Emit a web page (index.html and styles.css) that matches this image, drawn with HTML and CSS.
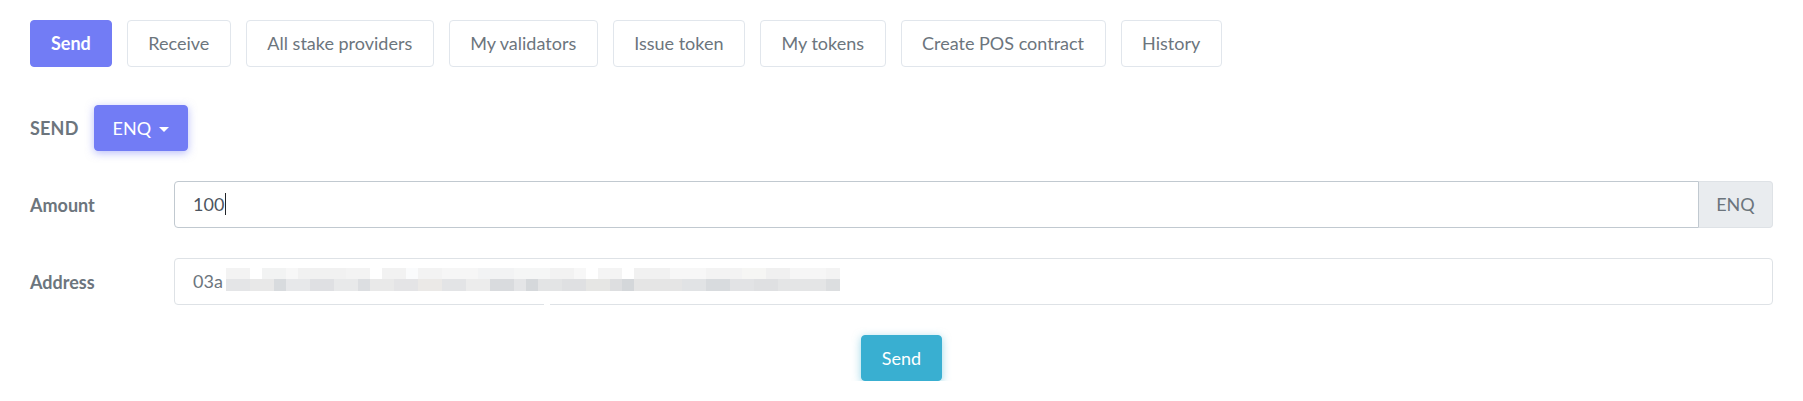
FILE: index.html
```html
<!DOCTYPE html>
<html lang="en">
<head>
<meta charset="utf-8">
<title>Send</title>
<link rel="stylesheet" href="styles.css">
</head>
<body>
<div class="page">
  <nav class="tabs">
    <button class="tab active">Send</button>
    <button class="tab">Receive</button>
    <button class="tab">All stake providers</button>
    <button class="tab">My validators</button>
    <button class="tab">Issue token</button>
    <button class="tab">My tokens</button>
    <button class="tab">Create POS contract</button>
    <button class="tab">History</button>
  </nav>

  <div class="send-head">
    <span class="send-title">SEND</span>
    <button class="btn btn-primary dropdown-toggle">ENQ</button>
  </div>

  <div class="form-row">
    <label class="form-label">Amount</label>
    <div class="input-group">
      <div class="form-control focused">100<span class="text-caret"></span></div>
      <span class="addon">ENQ</span>
    </div>
  </div>

  <div class="form-row">
    <label class="form-label">Address</label>
    <div class="form-control address">03a<span class="blurred"><span class="blur-top"></span><span class="blur-bottom"></span></span></div>
  </div>

  <div class="actions">
    <button class="btn btn-info">Send</button>
  </div>
</div>
</body>
</html>
```

FILE: styles.css
```css
html, body {
  margin: 0;
  background: #fff;
}

.page {
  padding: 20px 30px 0 30px;
  font-family: Lato, "Open Sans", "Liberation Sans", sans-serif;
  font-size: 18px;
  color: #6c757d;
}

.tabs {
  display: flex;
  gap: 15px;
}

.tab {
  box-sizing: border-box;
  height: 47px;
  padding: 0 20.5px;
  border: 1px solid #e1e6ec;
  border-radius: 4px;
  background: #fff;
  font-family: inherit;
  font-size: 18px;
  color: #6c757d;
  line-height: 45px;
}

.tab.active {
  padding: 0 20px;
  background: #727cf5;
  border-color: #727cf5;
  color: #fff;
  font-weight: 700;
}

.send-head {
  display: flex;
  align-items: center;
  gap: 15px;
  margin-top: 38px;
}

.send-title {
  font-weight: 700;
  letter-spacing: 0.2px;
}

.btn {
  box-sizing: border-box;
  height: 46px;
  padding: 0 20px;
  border: 1px solid transparent;
  border-radius: 4px;
  font-family: inherit;
  font-size: 18px;
  line-height: 44px;
  color: #fff;
}

.btn-primary {
  padding: 0 18px;
  background: #727cf5;
  border-color: #727cf5;
  box-shadow: 0 2px 8px 0 rgba(114, 124, 245, 0.5);
}

.dropdown-toggle::after {
  content: "";
  display: inline-block;
  margin-left: 8px;
  vertical-align: 3px;
  border-top: 5px solid #fff;
  border-left: 5px solid transparent;
  border-right: 5px solid transparent;
}

.btn-info {
  background: #39afd1;
  border-color: #39afd1;
  box-shadow: 0 2px 8px 0 rgba(57, 175, 209, 0.5);
}

.form-row {
  display: grid;
  grid-template-columns: 144px 1fr;
  align-items: center;
  margin-top: 30px;
}

.form-label {
  font-weight: 700;
  color: #6c757d;
}

.input-group {
  display: flex;
}

.form-control {
  box-sizing: border-box;
  height: 47px;
  padding: 9px 18px;
  border: 1px solid #dee2e6;
  border-radius: 4px;
  line-height: 27px;
  color: #6c757d;
  white-space: nowrap;
}

.form-control.address {
  position: relative;
}

.form-control.address::after {
  content: "";
  position: absolute;
  left: 369px;
  bottom: -1px;
  width: 6px;
  height: 1px;
  background: #fff;
}

.form-control.focused {
  flex: 1;
  border-color: #c1c9d0;
  border-radius: 4px 0 0 4px;
  color: #4d5560;
}

.text-caret {
  display: inline-block;
  width: 1px;
  height: 22px;
  margin-left: 1px;
  vertical-align: -4px;
  background: #212529;
}

.addon {
  box-sizing: border-box;
  width: 74px;
  height: 47px;
  border: 1px solid #dee2e6;
  border-left: 0;
  border-radius: 0 4px 4px 0;
  background: #e9ecef;
  text-align: center;
  line-height: 45px;
  color: #6c757d;
}

.blurred {
  display: inline-flex;
  flex-direction: column;
  width: 614px;
  height: 23px;
  margin-left: 3px;
  vertical-align: top;
}

.blur-top {
  height: 11px;
  background: linear-gradient(90deg,
    #f3f3f3 0 24px, #fff 24px 36px, #f2f3f3 36px 60px, #f7f7f7 60px 72px,
    #f1f1f1 72px 120px, #f3f3f3 120px 144px, #fff 144px 156px, #f2f2f2 156px 180px,
    #fafbfc 180px 192px, #f3f3f3 192px 216px, #f6f6f6 216px 252px, #f2f3f4 252px 288px,
    #f5f6f6 288px 324px, #f2f2f2 324px 348px, #f7f7f7 348px 360px, #fff 360px 372px,
    #f4f4f4 372px 396px, #fff 396px 408px, #f1f1f1 408px 444px, #f7f7f7 444px 480px,
    #f3f3f3 480px 516px, #f6f6f4 516px 540px, #f0f0f0 540px 564px, #f6f6f6 564px 600px,
    #f3f3f3 600px 614px);
}

.blur-bottom {
  height: 12px;
  background: linear-gradient(90deg,
    #e4e5e7 0 24px, #e8e8e8 24px 48px, #d8dbde 48px 60px, #e7e8ea 60px 84px,
    #dfe0e3 84px 108px, #e8e9ea 108px 132px, #dcdee1 132px 144px, #e9e9e9 144px 168px,
    #e4e4e6 168px 192px, #ebe9e7 192px 216px, #e3e4e6 216px 240px, #ececec 240px 264px,
    #d9dbde 264px 288px, #e4e5e7 288px 300px, #d5d8db 300px 312px, #e3e4e5 312px 336px,
    #dfe0e2 336px 360px, #e6e6e4 360px 384px, #dddee0 384px 396px, #d4d7da 396px 408px,
    #e5e5e5 408px 456px, #e1e3e5 456px 480px, #d8dbde 480px 504px, #e2e3e5 504px 528px,
    #dfe0e2 528px 552px, #e4e5e6 552px 600px, #dcdee0 600px 614px);
}

.actions {
  display: flex;
  justify-content: center;
  margin-top: 30px;
}
```
